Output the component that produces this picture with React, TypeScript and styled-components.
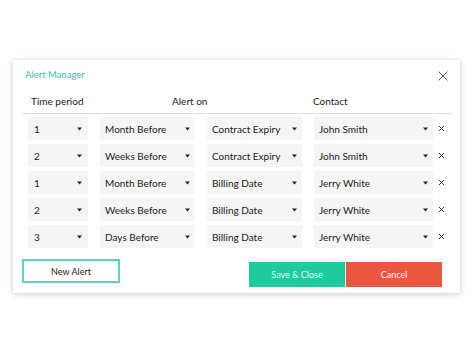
import React from "react";
import styled, { createGlobalStyle } from "styled-components";

const GlobalStyle = createGlobalStyle`
  html, body { margin: 0; padding: 0; background: #ffffff; }
  body { font-family: Lato, "Open Sans", "Liberation Sans", sans-serif; color: #1a1a1a; }
  * { box-sizing: border-box; }
`;

const Page = styled.div`
  width: 474px;
  height: 355px;
  padding: 60px 0 0 13px;
`;

const Card = styled.div`
  width: 447px;
  height: 233px;
  background: #fff;
  box-shadow: 0 1px 6px rgba(0, 0, 0, 0.22);
  padding: 0 8px 6px 9px;
  display: flex;
  flex-direction: column;
`;

const TitleBar = styled.div`
  height: 30px;
  display: flex;
  align-items: center;
  justify-content: space-between;
  padding: 0 4px 2px 3px;
`;

const Title = styled.div`
  font-size: 9.5px;
  color: #2fc6a3;
`;

const CloseButton = styled.button`
  border: 0;
  background: none;
  padding: 0;
  margin-top: 3px;
  width: 10px;
  height: 10px;
  display: flex;
  cursor: pointer;
`;

const HeaderRow = styled.div`
  height: 24px;
  display: grid;
  grid-template-columns: 141px 141px 1fr;
  align-items: center;
  padding: 0 0 1px 9px;
  border-bottom: 1px solid #dedede;
`;

const HeaderCell = styled.div`
  font-size: 10px;
  color: #1a1a1a;
`;

const Rows = styled.div`
  padding: 3px 0 0 6px;
  display: flex;
  flex-direction: column;
  gap: 4px;
`;

const Row = styled.div`
  display: grid;
  grid-template-columns: 60px 95px 95px 119px 12px;
  column-gap: 12px;
  align-items: center;
`;

const Select = styled.div<{ $tight?: boolean }>`
  height: 23px;
  background: #f5f5f5;
  display: flex;
  align-items: center;
  justify-content: space-between;
  padding: 0 ${(p) => (p.$tight ? 6 : 5)}px 0 ${(p) => (p.$tight ? 6 : 5)}px;
  font-size: 10px;
  color: #1a1a1a;
`;

const Remove = styled.button`
  border: 0;
  background: none;
  padding: 0;
  margin-left: -7px;
  width: 8px;
  height: 8px;
  display: flex;
  cursor: pointer;
`;

const Footer = styled.div`
  margin-top: 11px;
  display: flex;
  justify-content: space-between;
  align-items: flex-start;
  padding-right: 10px;
`;

const OutlineButton = styled.button`
  width: 98px;
  height: 24px;
  border: 2px solid #5dd3b5;
  background: #fff;
  font-family: inherit;
  font-size: 9px;
  color: #1a1a1a;
  cursor: pointer;
`;

const ButtonGroup = styled.div`
  margin-top: 3px;
  display: flex;
  gap: 1px;
`;

const SolidButton = styled.button<{ $color: string }>`
  width: 96px;
  height: 25px;
  border: 0;
  background: ${(p) => p.$color};
  color: #eefaf6;
  font-family: inherit;
  font-size: 9px;
  cursor: pointer;
`;

const Caret = () => (
  <svg width="5" height="4" viewBox="0 0 5 4">
    <path d="M0 0.5 L5 0.5 L2.5 3.5 Z" fill="#222" />
  </svg>
);

const rows = [
  ["1", "Month Before", "Contract Expiry", "John Smith"],
  ["2", "Weeks Before", "Contract Expiry", "John Smith"],
  ["1", "Month Before", "Billing Date", "Jerry White"],
  ["2", "Weeks Before", "Billing Date", "Jerry White"],
  ["3", "Days Before", "Billing Date", "Jerry White"],
];

export default function App() {
  return (
    <>
      <GlobalStyle />
      <Page>
        <Card>
          <TitleBar>
            <Title>Alert Manager</Title>
            <CloseButton aria-label="Close">
              <svg width="10" height="10" viewBox="0 0 10 10">
                <path d="M0.5 0.5 L9.5 9.5 M9.5 0.5 L0.5 9.5" stroke="#555" strokeWidth="1" />
              </svg>
            </CloseButton>
          </TitleBar>
          <HeaderRow>
            <HeaderCell>Time period</HeaderCell>
            <HeaderCell>Alert on</HeaderCell>
            <HeaderCell>Contact</HeaderCell>
          </HeaderRow>
          <Rows>
            {rows.map((r, i) => (
              <Row key={i}>
                <Select $tight>
                  <span>{r[0]}</span>
                  <Caret />
                </Select>
                <Select>
                  <span>{r[1]}</span>
                  <Caret />
                </Select>
                <Select>
                  <span>{r[2]}</span>
                  <Caret />
                </Select>
                <Select>
                  <span>{r[3]}</span>
                  <Caret />
                </Select>
                <Remove aria-label="Remove">
                  <svg width="7" height="7" viewBox="0 0 7 7">
                    <path d="M1 1 L6 6 M6 1 L1 6" stroke="#333" strokeWidth="1" />
                  </svg>
                </Remove>
              </Row>
            ))}
          </Rows>
          <Footer>
            <OutlineButton>New Alert</OutlineButton>
            <ButtonGroup>
              <SolidButton $color="#1fcb9d">Save &amp; Close</SolidButton>
              <SolidButton $color="#e9573f">Cancel</SolidButton>
            </ButtonGroup>
          </Footer>
        </Card>
      </Page>
    </>
  );
}
